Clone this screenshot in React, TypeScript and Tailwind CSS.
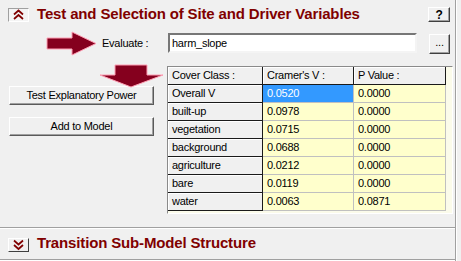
import { FC } from 'react'

const rows = [
  ['Overall V', '0.0520', '0.0000'],
  ['built-up', '0.0978', '0.0000'],
  ['vegetation', '0.0715', '0.0000'],
  ['background', '0.0688', '0.0000'],
  ['agriculture', '0.0212', '0.0000'],
  ['bare', '0.0119', '0.0000'],
  ['water', '0.0063', '0.0871'],
]

const Chevrons: FC<{ down?: boolean }> = ({ down }) => (
  <svg width="19" height="12" viewBox="0 0 19 12">
    {down ? (
      <g fill="none" stroke="#800000" strokeWidth="1.7">
        <polyline points="5,1.5 9.5,5.5 14,1.5" />
        <polyline points="5,6 9.5,10 14,6" />
      </g>
    ) : (
      <g fill="none" stroke="#800000" strokeWidth="1.7">
        <polyline points="5,5.5 9.5,1.5 14,5.5" />
        <polyline points="5,10 9.5,6 14,10" />
      </g>
    )}
  </svg>
)

const fixedCell =
  'h-[18px] flex items-center pl-[4px] bg-[#f0f0f0] border-r border-b border-[#1a1a1a] shadow-[inset_1px_1px_0_#ffffff]'
const dataCell =
  'h-[18px] flex items-center pl-[4px] bg-[#ffffcc] border-r border-b border-[#c0c0c0]'

const App: FC = () => {
  return (
    <div className="relative w-[461px] h-[261px] overflow-hidden bg-[#f0f0f0] font-['Liberation_Sans',Arial,sans-serif] text-[11px] tracking-[-0.25px] text-black flex">
      <div className="w-[456px] border-r border-[#a0a0a0] flex flex-col">
        {/* expanded section */}
        <div className="h-[228px] border-b border-[#a0a0a0] shadow-[0_1px_0_#ffffff] flex flex-col">
          <div className="h-[29px] flex items-center">
            <div className="ml-[8px] mt-[1px] w-[21px] h-[14px] border border-t-[#a0a0a0] border-l-[#a0a0a0] border-b-white border-r-white bg-[#f4f4f4]">
              <Chevrons />
            </div>
            <div className="ml-[8px] -mt-[1px] text-[15px] font-bold tracking-[-0.15px] text-[#800000]">
              Test and Selection of Site and Driver Variables
            </div>
            <div className="ml-auto mr-[5px] w-[22px] h-[15px] flex items-center justify-center border border-t-white border-l-white border-b-[#404040] border-r-[#404040] shadow-[inset_-1px_-1px_0_#a0a0a0] text-[12px] font-bold">
              ?
            </div>
          </div>

          <div className="mt-[2px] h-[24px] flex items-center">
            <svg className="ml-[46px]" width="52" height="25" viewBox="0 0 52 25">
              <path d="M1 7 H26 V1 L50 12.5 L26 24 V18 H1 Z" fill="#85001e" stroke="#ff9fb4" strokeWidth="1" />
            </svg>
            <div className="ml-[4px] w-[66px]">Evaluate :</div>
            <div className="w-[249px] h-[20px] bg-white border-2 border-t-[#777] border-l-[#777] border-b-[#f4f4f4] border-r-[#f4f4f4] flex items-center pl-[2px]">
              harm_slope
            </div>
            <div className="ml-[12px] mt-[1px] w-[21px] h-[20px] flex items-center justify-center border border-t-white border-l-white border-b-[#404040] border-r-[#404040] shadow-[inset_-1px_-1px_0_#a0a0a0] leading-none pb-[2px]">
              ...
            </div>
          </div>

          <div className="flex">
            <div className="w-[167px] pl-[9px] pt-[31px] flex flex-col gap-[12px]">
              <div className="w-[145px] h-[19px] flex items-center justify-center border border-t-white border-l-white border-b-[#5a5a5a] border-r-[#5a5a5a] shadow-[inset_-1px_-1px_0_#a0a0a0]">
                Test Explanatory Power
              </div>
              <div className="w-[145px] h-[19px] flex items-center justify-center border border-t-white border-l-white border-b-[#5a5a5a] border-r-[#5a5a5a] shadow-[inset_-1px_-1px_0_#a0a0a0]">
                Add to Model
              </div>
            </div>

            <div className="mt-[11px] w-[286px] h-[148px] border border-t-[#8a8a8a] border-l-[#8a8a8a] border-b-white border-r-white bg-[#fbfbea]">
              <div className="grid grid-cols-[95px_91px_92px]">
                <div className={fixedCell}>Cover Class :</div>
                <div className={fixedCell}>Cramer's V :</div>
                <div className={fixedCell}>P Value :</div>
                {rows.map((r, i) => (
                  <div key={r[0]} className="contents">
                    <div className={fixedCell}>{r[0]}</div>
                    <div
                      className={
                        i === 0
                          ? 'h-[18px] flex items-center pl-[4px] bg-[#3399ff] text-white border-r border-b border-[#c0c0c0]'
                          : dataCell
                      }
                    >
                      {r[1]}
                    </div>
                    <div className={dataCell}>{r[2]}</div>
                  </div>
                ))}
              </div>
            </div>
          </div>
        </div>

        {/* collapsed section */}
        <div className="mt-[1px] h-[31px] border-b border-[#a0a0a0] shadow-[0_1px_0_#ffffff] flex items-center">
          <div className="ml-[8px] mt-[1px] w-[21px] h-[14px] border border-t-white border-l-white border-b-[#404040] border-r-[#404040] bg-[#f0f0f0]">
            <Chevrons down />
          </div>
          <div className="ml-[8px] -mt-[1px] text-[15px] font-bold tracking-[-0.15px] text-[#800000]">
            Transition Sub-Model Structure
          </div>
        </div>
      </div>
      <div className="w-[1px] bg-white" />

      {/* pointer arrow over the test button */}
      <svg className="absolute left-[99px] top-[64px]" width="66" height="24" viewBox="0 0 66 24">
        <path d="M16 1 H48 V11 H64 L32 23 L1 11 H16 Z" fill="#85001e" stroke="#ff9fb4" strokeWidth="1" />
      </svg>
    </div>
  )
}

export default App
